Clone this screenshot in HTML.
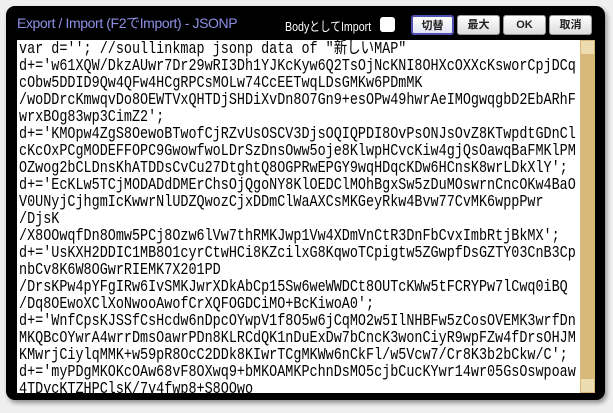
<!DOCTYPE html>
<html><head><meta charset="utf-8"><style>
body{margin:0;width:613px;height:413px;background:#efefef;overflow:hidden;font-family:"Liberation Sans","Noto Sans CJK JP",sans-serif}
.dlg{position:absolute;left:6px;top:6px;width:599px;height:394px;background:#000;border-radius:9px;box-shadow:2px 3px 5px rgba(0,0,0,.4)}
.title{position:absolute;left:17px;top:13px;color:#8f8fe6;font-size:14px;letter-spacing:-0.4px}
.bi{position:absolute;left:285px;top:16px;color:#fff;font-size:13px;white-space:nowrap;transform:scaleX(0.82);transform-origin:0 0}
.cb{position:absolute;left:380px;top:17px;width:15px;height:15px;background:#fff;border-radius:3px}
.btn{position:absolute;top:15px;height:20px;width:43px;background:linear-gradient(#fff,#dcdcdc);border:1px solid #999;border-radius:3px;font-size:11px;font-weight:bold;text-align:center;line-height:18px;color:#222;box-sizing:border-box}
.ta{position:absolute;left:17px;top:40px;width:578px;height:353px;background:#fff;overflow:hidden}
.sb{position:absolute;right:0;top:0;width:15px;height:353px;background:#d8b878}
.sb .a{position:absolute;left:1px;width:13px;height:13px;background:#ecdcb0}
.txt{position:absolute;left:2px;top:0;white-space:pre;font-family:"Liberation Mono",monospace;font-size:16.5px;line-height:17px;transform:scaleX(0.815);transform-origin:0 0;color:#000}
</style></head><body>
<div class="dlg"></div>
<div class="title">Export / Import (F2でImport) - JSONP</div>
<div class="bi">BodyとしてImport</div>
<div class="cb"></div>
<div class="btn" style="left:411px;border:2px solid #5050b0;background:linear-gradient(#fff,#e4e4f4)">切替</div>
<div class="btn" style="left:457px">最大</div>
<div class="btn" style="left:503px">OK</div>
<div class="btn" style="left:549px">取消</div>
<div class="ta">
<div class="txt">var d=''; //soullinkmap jsonp data of "新しいMAP"
d+='w61XQW/DkzAUwr7Dr29wRI3Dh1YJKcKyw6Q2TsOjNcKNI8OHXcOXXcKsworCpjDCq
cObw5DDID9Qw4QFw4HCgRPCsMOLw74CcEETwqLDsGMKw6PDmMK
/woDDrcKmwqvDo8OEWTVxQHTDjSHDiXvDn8O7Gn9+esOPw49hwrAeIMOgwqgbD2EbARhF
wrxBOg83wp3CimZ2';
d+='KMOpw4ZgS8OewoBTwofCjRZvUsOSCV3DjsOQIQPDI8OvPsONJsOvZ8KTwpdtGDnCl
cKcOxPCgMODEFFOPC9GwowfwoLDrSzDnsOww5oje8KlwpHCvcKiw4gjQsOawqBaFMKlPM
OZwog2bCLDnsKhATDDsCvCu27DtghtQ8OGPRwEPGY9wqHDqcKDw6HCnsK8wrLDkXlY';
d+='EcKLw5TCjMODADdDMErChsOjQgoNY8KlOEDClMOhBgxSw5zDuMOswrnCncOKw4BaO
V0UNyjCjhgmIcKwwrNlUDZQwozCjxDDmClWaAXCsMKGeyRkw4Bvw77CvMK6wppPwr
/DjsK
/X8OOwqfDn8Omw5PCj8Ozw6lVw7thRMKJwp1Vw4XDmVnCtR3DnFbCvxImbRtjBkMX';
d+='UsKXH2DDIC1MB8O1cyrCtwHCi8KZcilxG8KqwoTCpigtw5ZGwpfDsGZTY03CnB3Cp
nbCv8K6W8OGwrRIEMK7X201PD
/DrsKPw4pYFgIRw6IvSMKJwrXDkAbCp15Sw6weWWDCt8OUTcKWw5tFCRYPw7lCwq0iBQ
/Dq8OEwoXClXoNwooAwofCrXQFOGDCiMO+BcKiwoA0';
d+='WnfCpsKJSSfCsHcdw6nDpcOYwpV1f8O5w6jCqMO2w5IlNHBFw5zCosOVEMK3wrfDn
MKQBcOYwrA4wrrDmsOawrPDn8KLRCdQK1nDuExDw7bCncK3wonCiyR9wpFZw4fDrsOHJM
KMwrjCiylqMMK+w59pR8OcC2DDk8KIwrTCgMKWw6nCkFl/w5Vcw7/Cr8K3b2bCkw/C';
d+='myPDgMKOKcOAw68vF8OXwq9+bMKOAMKPchnDsMO5cjbCucKYwr14wr05GsOswpoaw
4TDvcKTZHPClsK/7v4fwp8+S8OOwo</div>
<div class="sb"><div class="a" style="top:1px"></div><div class="a" style="bottom:1px"></div></div>
</div>
</body></html>
